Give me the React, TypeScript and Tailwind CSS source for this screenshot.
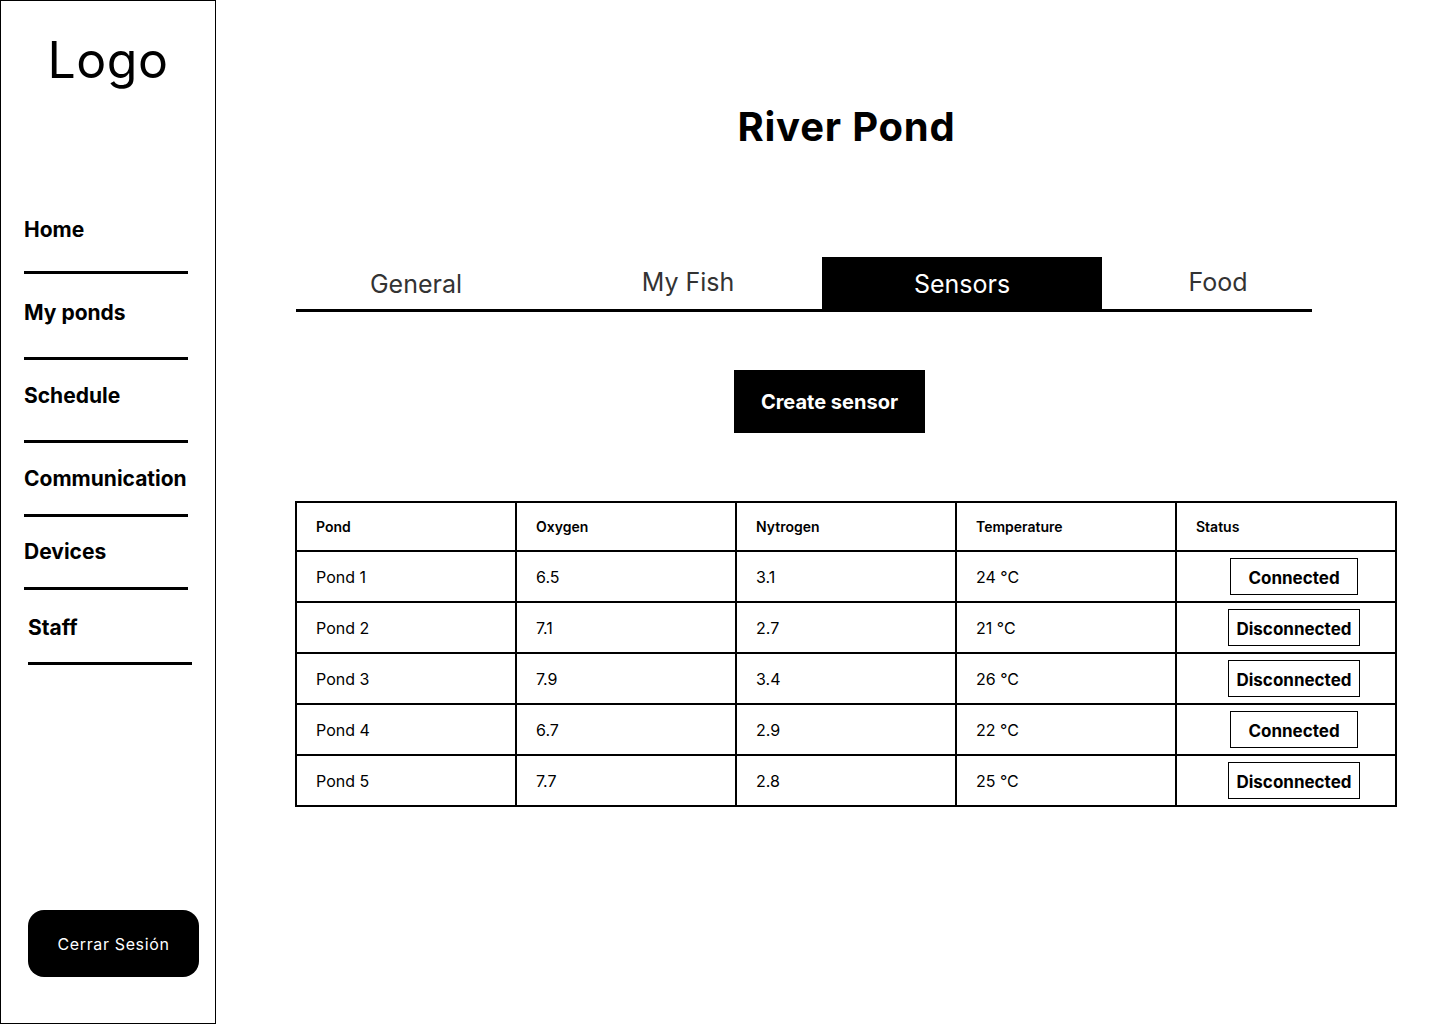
import { useState } from "react";

const navItems = [
  { label: "Home", text: "mt-[134px] pl-[23px]", line: "mt-[29px] ml-[23px]" },
  { label: "My ponds", text: "mt-[27px] pl-[23px]", line: "mt-[32px] ml-[23px]" },
  { label: "Schedule", text: "mt-[24px] pl-[23px]", line: "mt-[32px] ml-[23px]" },
  { label: "Communication", text: "mt-[24px] pl-[23px]", line: "mt-[23px] ml-[23px]" },
  { label: "Devices", text: "mt-[23px] pl-[23px]", line: "mt-[23px] ml-[23px]" },
  { label: "Staff", text: "mt-[26px] pl-[27px]", line: "mt-[22px] ml-[27px]" },
];

const tabs = [
  { label: "General", width: "w-[240px]", text: "pt-[3px]" },
  { label: "My Fish", width: "w-[286px]", text: "pl-[18px]" },
  { label: "Sensors", width: "w-[280px]", text: "pt-[3px]" },
  { label: "Food", width: "w-[210px]", text: "pl-[22px]" },
];

const rows = [
  { pond: "Pond 1", oxygen: "6.5", nitrogen: "3.1", temp: "24 °C", connected: true },
  { pond: "Pond 2", oxygen: "7.1", nitrogen: "2.7", temp: "21 °C", connected: false },
  { pond: "Pond 3", oxygen: "7.9", nitrogen: "3.4", temp: "26 °C", connected: false },
  { pond: "Pond 4", oxygen: "6.7", nitrogen: "2.9", temp: "22 °C", connected: true },
  { pond: "Pond 5", oxygen: "7.7", nitrogen: "2.8", temp: "25 °C", connected: false },
];

function Sidebar() {
  return (
    <aside className="flex h-[1024px] w-[216px] shrink-0 flex-col border border-black bg-white">
      <div className="mt-[35px] text-center text-[50px] leading-[48px] tracking-[0.01em] text-black">
        Logo
      </div>
      <nav className="flex flex-col">
        {navItems.map((item) => (
          <div key={item.label} className="flex flex-col">
            <a href="#" className={`${item.text} text-[21px] font-bold leading-[24px] text-black`}>
              {item.label}
            </a>
            <div className={`${item.line} h-[3px] w-[164px] bg-black`} />
          </div>
        ))}
      </nav>
      <button className="mt-auto mb-[46px] ml-[27px] h-[67px] w-[171px] rounded-[16px] bg-black text-[16px] tracking-[0.04em] text-white">
        Cerrar Sesión
      </button>
    </aside>
  );
}

export default function App() {
  const [active, setActive] = useState("Sensors");

  return (
    <div className="flex min-h-[1024px] w-[1440px] bg-white font-['Inter',sans-serif] text-black">
      <Sidebar />
      <main className="flex flex-1 flex-col pl-[80px]">
        <h1 className="mt-[103px] w-[1101px] text-center text-[40px] font-bold leading-[48px] tracking-[0.02em]">
          River Pond
        </h1>

        <div className="mt-[106px] flex w-[1016px] border-b-[3px] border-black">
          {tabs.map((t) => (
            <button
              key={t.label}
              onClick={() => setActive(t.label)}
              className={`${t.width} ${t.text} flex h-[52px] items-center justify-center text-[25px] ${
                active === t.label ? "bg-black text-white" : "text-[#333333]"
              }`}
            >
              {t.label}
            </button>
          ))}
        </div>

        <button className="mt-[58px] ml-[438px] h-[63px] w-[191px] bg-black text-[20px] font-bold text-white">
          Create sensor
        </button>

        <table className="mt-[68px] -ml-px w-[1102px] table-fixed border-collapse border-2 border-black">
          <thead>
            <tr className="h-[49px]">
              {["Pond", "Oxygen", "Nytrogen", "Temperature", "Status"].map((h) => (
                <th
                  key={h}
                  className="border-2 border-black pl-[19px] text-left text-[14px] font-semibold"
                >
                  {h}
                </th>
              ))}
            </tr>
          </thead>
          <tbody>
            {rows.map((r) => (
              <tr key={r.pond} className="h-[51px] text-[16px]">
                <td className="border-2 border-black pl-[19px]">{r.pond}</td>
                <td className="border-2 border-black pl-[19px]">{r.oxygen}</td>
                <td className="border-2 border-black pl-[19px]">{r.nitrogen}</td>
                <td className="border-2 border-black pl-[19px]">{r.temp}</td>
                <td className="border-2 border-black pl-[16px]">
                  <div className="flex justify-center">
                    <span className="inline-flex h-[37px] min-w-[128px] items-center justify-center border border-black px-[7px] pt-[4px] text-[17px] font-bold">
                      {r.connected ? "Connected" : "Disconnected"}
                    </span>
                  </div>
                </td>
              </tr>
            ))}
          </tbody>
        </table>
      </main>
    </div>
  );
}
